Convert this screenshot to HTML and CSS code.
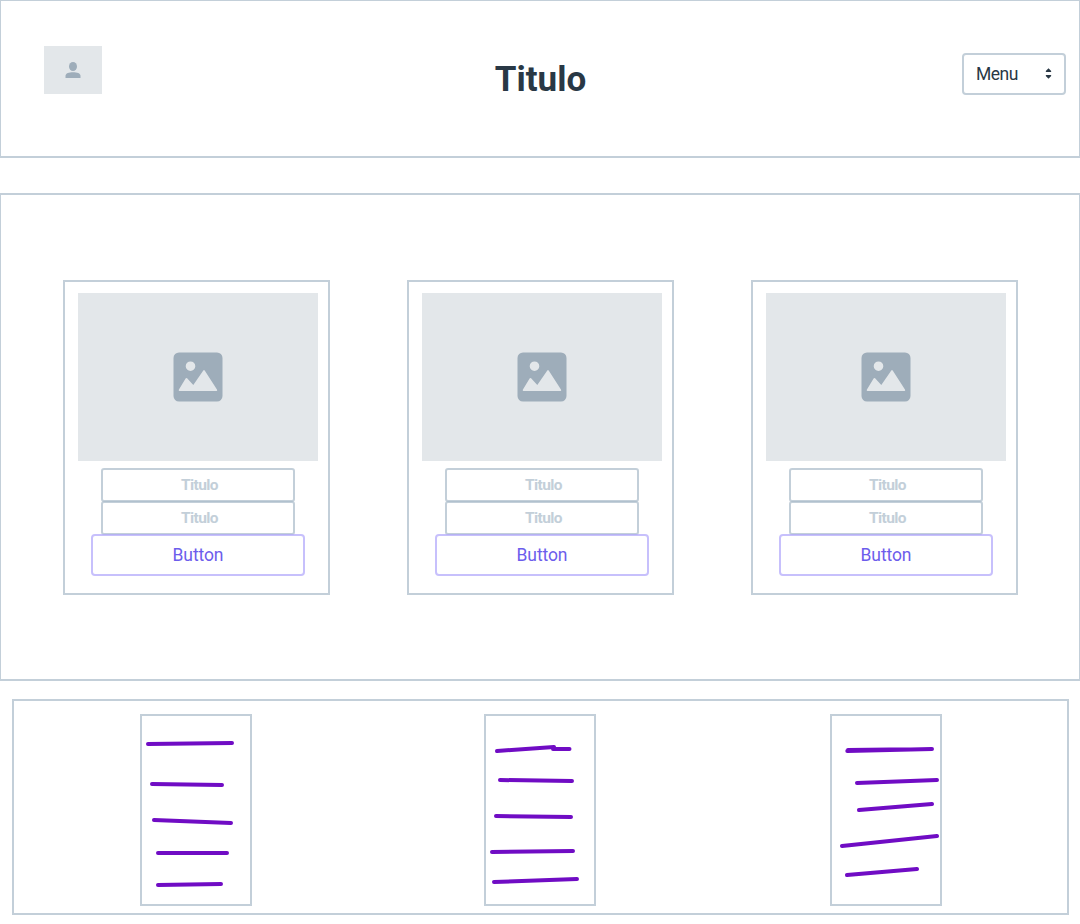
FILE: index.html
```html
<!DOCTYPE html>
<html lang="es">
<head>
<meta charset="utf-8">
<title>Titulo</title>
<link rel="stylesheet" href="styles.css">
</head>
<body>
<svg class="defs" aria-hidden="true">
  <symbol id="picture" viewBox="0 0 50 50">
    <path fill-rule="evenodd" d="M6 .5h38a5.500 5.500 0 0 1 5.500 5.500v38a5.500 5.500 0 0 1-5.500 5.500H6a5.500 5.500 0 0 1-5.500-5.500V6A5.500 5.500 0 0 1 6 .5ZM17.500 9.400a4.800 4.800 0 1 0 0 9.600 4.800 4.800 0 0 0 0-9.600ZM6.300 39h37.400q.8-.4.400-1.200L31.700 18.600q-.7-1-1.400 0L20.300 33 14.100 26.300q-.8-.8-1.500.1L5.800 37.700q-.4.900.5 1.300Z"/>
  </symbol>
</svg>
<header class="header">
  <div class="avatar">
    <svg width="16" height="16" viewBox="0 0 16 16"><ellipse cx="8" cy="4.500" rx="4" ry="4.500"/><path d="M.5 16v-2.200C.5 11.300 4 10.200 8 10.200s7.500 1.100 7.500 3.600V16Z"/></svg>
  </div>
  <h1 class="title">Titulo</h1>
  <button class="menu"><span>Menu</span>
    <svg width="7" height="11" viewBox="0 0 7 11"><path d="M3.500.2 6.200 3.100Q6.400 4 5.700 4H1.300Q.6 4 .8 3.100ZM3.500 10.800.8 7.900Q.6 7 1.300 7h4.400q.7 0 .5.900Z"/></svg>
  </button>
</header>
<main class="gallery">
  <article class="card">
    <div class="photo"><svg><use href="#picture"/></svg></div>
    <div class="field">Titulo</div>
    <div class="field">Titulo</div>
    <button class="action">Button</button>
  </article>
  <article class="card">
    <div class="photo"><svg><use href="#picture"/></svg></div>
    <div class="field">Titulo</div>
    <div class="field">Titulo</div>
    <button class="action">Button</button>
  </article>
  <article class="card">
    <div class="photo"><svg><use href="#picture"/></svg></div>
    <div class="field">Titulo</div>
    <div class="field">Titulo</div>
    <button class="action">Button</button>
  </article>
</main>
<footer class="footer">
  <div class="notes"><svg viewBox="142 716 108 188"><path d="M148 744 232 743M152 784 222 785M154 820 231 823M158 853H227M158 885 221 884"/></svg></div>
  <div class="notes"><svg viewBox="486 716 108 188"><path d="M497 751 554 747M553 749H569.500M500 780 572 781M496 816 571 817M492 852 573 851M494 882 577 879"/></svg></div>
  <div class="notes"><svg viewBox="832 716 108 188"><path d="M847.300 751 932 749M848 750 932 749M857 783 937 780M859 810 932 804M842 846 937 836M847 875 917 869"/></svg></div>
</footer>
</body>
</html>
```
FILE: styles.css
```css
* { box-sizing: border-box; }
body {
  margin: 0;
  height: 924px;
  background: #fff;
  color: #293845;
  font-family: Roboto, "Liberation Sans", sans-serif;
}
.defs { display: none; }
svg { display: block; }
button { font: inherit; background: transparent; }
.header {
  display: grid;
  grid-template-columns: 1fr auto 1fr;
  align-items: start;
  height: 158px;
  padding: 45px 13px 0 43px;
  border: 1px solid #c3cfd9;
  border-bottom-width: 2px;
}
.avatar {
  display: grid;
  place-items: center;
  width: 58px;
  height: 48px;
  background: #e3e7ea;
  fill: #9eadba;
}
.title {
  margin: 13px 0 0;
  padding-right: 29px;
  font-size: 35px;
  line-height: 42px;
  font-weight: 700;
}
.menu {
  display: flex;
  justify-content: space-between;
  align-items: center;
  justify-self: end;
  width: 104px;
  height: 42px;
  margin-top: 7px;
  padding: 0 12px;
  border: 2px solid #c3cfd9;
  border-radius: 4px;
  color: #293845;
  font-size: 17.5px;
  letter-spacing: -.5px;
}
.menu svg { fill: #293845; margin-top: -1px; }
.gallery {
  display: flex;
  gap: 77px;
  height: 488px;
  margin-top: 35px;
  padding: 85px 62px 0;
  border: solid #c3cfd9;
  border-width: 2px 1px;
}
.card {
  display: flex;
  flex-direction: column;
  align-items: center;
  width: 267px;
  height: 315px;
  padding: 11px 10px 0 13px;
  border: 2px solid #c3cfd9;
}
.photo {
  display: grid;
  place-items: center;
  width: 240px;
  height: 168px;
  margin-bottom: 7px;
  background: #e3e7ea;
  fill: #9eadba;
}
.photo svg { width: 50px; height: 50px; }
.field {
  width: 194px;
  height: 34px;
  margin-bottom: -1px;
  padding-left: 3px;
  border: 2px solid rgba(169, 186, 201, .7);
  border-radius: 3px;
  color: #c3cfd9;
  font-size: 15.5px;
  line-height: 30px;
  font-weight: 700;
  letter-spacing: -.6px;
  text-align: center;
}
.action {
  width: 214px;
  height: 42px;
  padding: 0;
  border: 2px solid rgba(175, 165, 251, .7);
  border-radius: 4px;
  color: #6c5dec;
  font-size: 17.5px;
  letter-spacing: -.1px;
}
.footer {
  display: flex;
  width: 1057px;
  height: 216px;
  margin: 18px 0 0 12px;
  padding: 13px 0 0 126px;
  border: 2px solid #c3cfd9;
}
.notes {
  width: 112px;
  height: 192px;
  margin-right: 232px;
  border: 2px solid #c3cfd9;
}
.notes:nth-child(2) { margin-right: 234px; }
.notes:last-child { margin-right: 0; }
.notes svg {
  width: 108px;
  height: 188px;
  fill: none;
  stroke: #700cc4;
  stroke-width: 4;
  stroke-linecap: round;
}
```
